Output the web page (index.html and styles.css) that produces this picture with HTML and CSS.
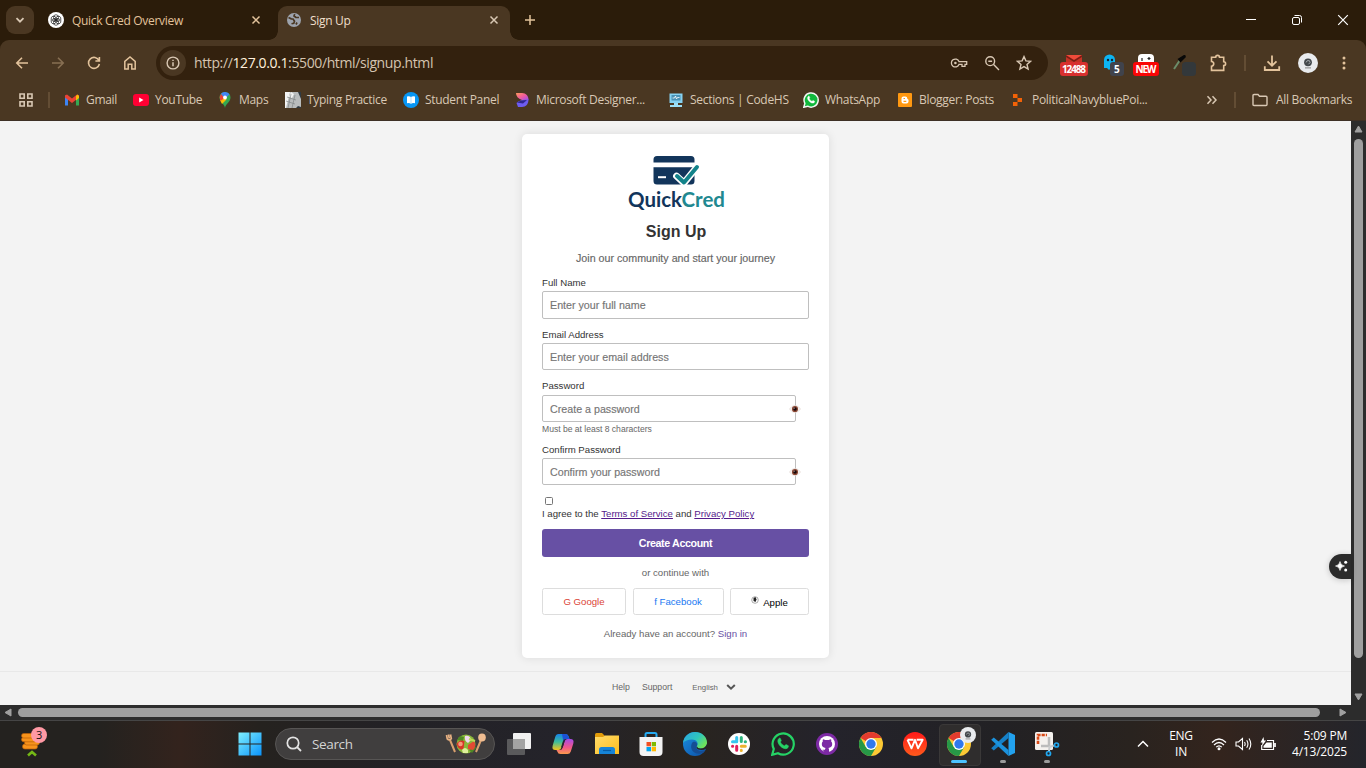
FILE: index.html
```html
<!DOCTYPE html>
<html lang="en">
<head>
<meta charset="utf-8">
<title>Sign Up</title>
<link rel="stylesheet" href="styles.css">
</head>
<body>
<svg class="defs" width="0" height="0" aria-hidden="true">
  <defs>
    <linearGradient id="gWin" x1="0" y1="0" x2="1" y2="1"><stop offset="0" stop-color="#7ff0ff"/><stop offset="1" stop-color="#0a93fa"/></linearGradient>
    <linearGradient id="gCopA" x1="0" y1="0" x2="0" y2="1"><stop offset="0" stop-color="#1683ea"/><stop offset=".5" stop-color="#3dbd9a"/><stop offset="1" stop-color="#f6c31c"/></linearGradient>
    <linearGradient id="gCopB" x1="0" y1="0" x2="0" y2="1"><stop offset="0" stop-color="#a64be8"/><stop offset=".55" stop-color="#f0568b"/><stop offset="1" stop-color="#fb9a4c"/></linearGradient>
    <linearGradient id="gFold" x1="0" y1="0" x2="1" y2="1"><stop offset="0" stop-color="#ffdc6b"/><stop offset="1" stop-color="#fdbd1d"/></linearGradient>
    <linearGradient id="gEdge" x1="0" y1="0" x2="1" y2=".6"><stop offset="0" stop-color="#2aa4e3"/><stop offset=".6" stop-color="#2fc6bd"/><stop offset="1" stop-color="#6ee25a"/></linearGradient>
    <linearGradient id="gEdge2" x1="0" y1="0" x2="1" y2="1"><stop offset="0" stop-color="#1b8fe0"/><stop offset="1" stop-color="#0c4fa5"/></linearGradient>
    <linearGradient id="gDes" x1="0" y1="0" x2="1" y2="1"><stop offset="0" stop-color="#ff9a5a"/><stop offset=".5" stop-color="#f25c9b"/><stop offset="1" stop-color="#9b4df0"/></linearGradient>
    <linearGradient id="gWps" x1="0" y1="0" x2="0" y2="1"><stop offset="0" stop-color="#ff1a1a"/><stop offset="1" stop-color="#ff5a1c"/></linearGradient>
    <symbol id="chrome" viewBox="0 0 24 24">
      <circle cx="12" cy="12" r="12" fill="#fcc934"/>
      <path d="M12 12L1.6 6A12 12 0 0 1 22.4 6H12z" fill="#e33b2e"/>
      <path d="M1.6 6A12 12 0 0 0 12 24L17.2 15 12 12 6.8 15z" fill="#279847"/>
      <circle cx="12" cy="12" r="6" fill="#fff"/><circle cx="12" cy="12" r="4.7" fill="#3079ee"/>
    </symbol>
    <symbol id="wa" viewBox="0 0 24 24">
      <path d="M1.2 22.8L2.8 17A10.6 10.6 0 1 1 7 21.3z" stroke-width="2.2"/>
    </symbol>
    <symbol id="phone" viewBox="0 0 24 24">
      <path d="M8.200 6.300c.8-.5 1.100-.1 1.400.7l.6 1.500c.1.5-.7 1.200-.9 1.500.9 1.900 2.400 3.200 4.300 3.900.5-.4 1-1.400 1.500-1.300l2.200 1.100c.4.6-.3 2.200-1.300 2.700-3.800 1.700-10.400-4.600-9-8.500.2-.7.6-1.200 1.200-1.600z" stroke-width=".6"/>
    </symbol>
    <symbol id="avatar" viewBox="0 0 20 20">
      <circle cx="10" cy="10" r="10" fill="#e9ebee"/><circle cx="10" cy="9.300" r="3.900" fill="#43484c"/><path d="M8 9.500l1-1.700 2.300-.2.800 2-1.700 1.700" fill="none" stroke="#a8adb0" stroke-width=".9"/><path d="M7 14.900h6" stroke="#777" stroke-width=".9"/>
    </symbol>
    <symbol id="eye" viewBox="0 0 12 8">
      <path d="M.5 4Q3 .5 6 .5T11.500 4Q9 7.500 6 7.500T.5 4z" fill="#fbf6f4" stroke="#d8ccc8" stroke-width=".6"/><circle cx="6" cy="4" r="3.100" fill="#8b4632"/><circle cx="6" cy="4" r="1.800" fill="#15080a"/><circle cx="5.100" cy="3.200" r=".6" fill="#cdb0b4"/>
    </symbol>
  </defs>
</svg>

<header class="browser">
  <div class="tabstrip">
    <button class="tabsearch"><svg width="10" height="10" viewBox="0 0 10 10"><path d="M1.500 3.200L5 6.700 8.500 3.200" class="ln cream" stroke-width="1.800"/></svg></button>
    <div class="tab">
      <svg width="16" height="16" viewBox="0 0 16 16"><circle cx="8" cy="8" r="8" fill="#fff"/><g fill="none" stroke="#222" stroke-width=".7"><ellipse cx="8" cy="5.700" rx="2.500" ry="3"/><ellipse cx="8" cy="5.700" rx="2.500" ry="3" transform="rotate(60 8 8)"/><ellipse cx="8" cy="5.700" rx="2.500" ry="3" transform="rotate(120 8 8)"/><ellipse cx="8" cy="5.700" rx="2.500" ry="3" transform="rotate(180 8 8)"/><ellipse cx="8" cy="5.700" rx="2.500" ry="3" transform="rotate(240 8 8)"/><ellipse cx="8" cy="5.700" rx="2.500" ry="3" transform="rotate(300 8 8)"/></g></svg>
      <span class="ui tabtitle">Quick Cred Overview</span>
      <svg width="10" height="10" viewBox="0 0 10 10"><path d="M1.500 1.500l7 7m0-7l-7 7" class="ln tan" stroke-width="1.500"/></svg>
    </div>
    <div class="tab active">
      <svg width="14" height="14" viewBox="0 0 14 14"><circle cx="7" cy="7" r="7" fill="#9da3ad"/><path d="M1.500 4.500l2.800 1.300 1.700.2 1.500 2.200-.7 2-2.300.6M7.800 1.200L7 3l1.800 1.300 3.200.2M9 11.500l1-2" fill="none" stroke="#4a3722" stroke-width="1.700"/></svg>
      <span class="ui tabtitle">Sign Up</span>
      <svg width="10" height="10" viewBox="0 0 10 10"><path d="M1.500 1.500l7 7m0-7l-7 7" class="ln cream" stroke-width="1.500"/></svg>
    </div>
    <svg class="newtab" width="12" height="12" viewBox="0 0 12 12"><path d="M6 1v10M1 6h10" class="ln tan" stroke-width="1.500"/></svg>
    <div class="winctl">
      <svg width="12" height="12" viewBox="0 0 12 12"><path d="M1 5.500h10" class="ln white"/></svg>
      <svg width="12" height="12" viewBox="0 0 12 12"><rect x="1.500" y="3.500" width="7" height="7" rx="1.500" class="ln white"/><path d="M3.500 1.500h5a2 2 0 0 1 2 2v5" class="ln white"/></svg>
      <svg width="12" height="12" viewBox="0 0 12 12"><path d="M1.200 1.200l9.600 9.600m0-9.600l-9.600 9.600" class="ln white" stroke-width="1.200"/></svg>
    </div>
  </div>

  <div class="toolbar">
    <div class="nav">
      <svg width="16" height="16" viewBox="0 0 16 16"><path d="M14 8H3M8 2.800L2.800 8 8 13.200" class="ln tan" stroke-width="1.600"/></svg>
      <svg class="dim" width="16" height="16" viewBox="0 0 16 16"><path d="M2 8h11M8 2.800L13.200 8 8 13.200" class="ln tan" stroke-width="1.600"/></svg>
      <svg width="16" height="16" viewBox="0 0 16 16"><path d="M13 5.500A5.500 5.500 0 1 0 13.400 9M13.400 2v4H9.400" class="ln tan" stroke-width="1.600"/></svg>
      <svg width="16" height="16" viewBox="0 0 16 16"><path d="M2.800 14V6.300L8 2l5.200 4.300V14H9.800V9.300H6.200V14z" class="ln tan" stroke-width="1.500"/></svg>
    </div>
    <div class="omnibox">
      <span class="info"><svg width="14" height="14" viewBox="0 0 14 14"><circle cx="7" cy="7" r="5.900" class="ln cream" stroke-width="1.400"/><path d="M7 6.200v4M7 3.700v1.300" class="ln cream" stroke-width="1.500"/></svg></span>
      <span class="ui url">http://<b>127.0.0.1</b>:5500/html/signup.html</span>
      <svg width="18" height="12" viewBox="0 0 20 14"><path d="M10 5.300A4.600 4.600 0 1 0 10 8.700H13.500v2.300h3.500V8.700h2V5.300z" class="ln cream" stroke-width="1.500"/><circle cx="5.800" cy="7" r="1.500" fill="#d9c8b4"/></svg>
      <svg width="16" height="16" viewBox="0 0 16 16"><circle cx="6.200" cy="6.200" r="4.400" class="ln cream" stroke-width="1.400"/><path d="M4.300 6.200h3.800M9.600 9.600L15 15" class="ln cream" stroke-width="1.400"/></svg>
      <svg width="16" height="16" viewBox="0 0 16 16"><path d="M8 1.600l1.900 4.300 4.700.4-3.600 3.100 1.100 4.600L8 11.600 3.900 14 5 9.400 1.400 6.300l4.700-.4z" class="ln cream" stroke-width="1.400"/></svg>
    </div>
    <div class="exts">
      <svg width="30" height="28" viewBox="0 0 30 28"><path d="M7 6h16v9H7z" fill="#7c1d14"/><path d="M7 6h16l-8 5z" fill="#ee4b3a"/><path d="M7 8v7h16V8l-8 5z" fill="#c43326"/><rect x="1" y="13" width="28" height="14" rx="3" fill="#d8302f"/><text x="3" y="24" class="badge" textLength="24">12488</text></svg>
      <svg width="26" height="28" viewBox="0 0 26 28"><path d="M5 19v-8a5.500 5.500 0 0 1 11 0v9l-3-2-3 3-2-2z" fill="#0db4f2"/><circle cx="9" cy="11" r="1.200" fill="#123"/><circle cx="13" cy="11" r="1.200" fill="#123"/><rect x="11" y="13" width="14" height="14" rx="3" fill="#40434c"/><text x="15" y="24" class="badge">5</text></svg>
      <svg width="28" height="28" viewBox="0 0 28 28"><rect x="6" y="5" width="16" height="14" rx="4" fill="#fff"/><path d="M10 9v3M15.500 9.500h3M17 8v3" stroke="#222" stroke-width="1.200"/><rect x="1" y="13" width="26" height="14" rx="3" fill="#f90606"/><text x="3.500" y="24" class="badge" textLength="21">NEW</text></svg>
      <svg width="28" height="28" viewBox="0 0 28 28"><path d="M5 20l6-9" stroke="#6b8e6b" stroke-width="2"/><path d="M8.500 10l3 3.500 5-5c1-2-.5-3-2-2.200z" fill="#080808"/><rect x="13" y="13" width="14" height="14" rx="3.500" fill="#33383b"/></svg>
      <svg width="20" height="20" viewBox="0 0 20 20"><path d="M2.500 4.300h4.200a1.900 1.900 0 0 1 3.800 0h4.200v4.500a1.900 1.900 0 0 1 0 3.800v4.800H2.500v-4.200c3-.2 3-4.500 0-4.700z" class="ln tan" stroke-width="1.600"/></svg>
      <i class="sep"></i>
      <svg width="18" height="18" viewBox="0 0 18 18"><path d="M9 1.500v10M4.500 7.300L9 11.700l4.500-4.400M1.800 12.300V16h14.400v-3.700" class="ln tan" stroke-width="1.800"/></svg>
      <svg width="20" height="20"><use href="#avatar"/></svg>
      <svg width="6" height="18" viewBox="0 0 6 18"><circle cx="3" cy="4" r="1.500" fill="#e3c39c"/><circle cx="3" cy="9" r="1.500" fill="#e3c39c"/><circle cx="3" cy="14" r="1.500" fill="#e3c39c"/></svg>
    </div>
  </div>

  <nav class="bookmarks ui">
    <svg width="16" height="16" viewBox="0 0 16 16"><path d="M2 2h4.200v4.200H2zM9.800 2H14v4.200H9.800zM2 9.800h4.200V14H2zM9.800 9.800H14V14H9.800z" class="ln cream" stroke-width="1.600"/></svg>
    <i class="sep"></i>
    <a><svg width="16" height="16" viewBox="0 0 16 16"><path d="M1 3v10.500h3V7z" fill="#3d84f5"/><path d="M15 3v10.500h-3V7z" fill="#34a853"/><path d="M1 3.500L3 2.500l5 4 5-4 2 1v2L8 11 1 5.500z" fill="#ea4335"/><path d="M12 4l1.500-1.500L15 4v2l-3 2.400z" fill="#fbbc04"/></svg><span>Gmail</span></a>
    <a><svg width="16" height="16" viewBox="0 0 16 16"><rect y="2" width="16" height="12" rx="3" fill="#ff0033"/><path d="M6.200 5.500v5L10.500 8z" fill="#fff"/></svg><span>YouTube</span></a>
    <a><svg width="16" height="16" viewBox="0 0 16 16"><path d="M8 16C7.500 12 2.500 10 2.500 5.500a5.500 5.500 0 0 1 11 0C13.500 10 8.500 12 8 16z" fill="#34a853"/><path d="M3 8l5-2.500 1.500 2L5 12z" fill="#fbbc04"/><path d="M2.600 5l1.500-3.200L8 5.500 3.500 9z" fill="#ea4335"/><path d="M4 1.700A5.500 5.500 0 0 1 12.500 2.300L8 7z" fill="#4285f4"/><circle cx="8" cy="5.500" r="1.900" fill="#fff"/></svg><span>Maps</span></a>
    <a><svg width="16" height="16" viewBox="0 0 16 16"><path d="M0 0h16v16H0z" fill="#b9bcbd"/><path d="M0 0h5L1 16H0zM6 0l3 2-2 4-3-1z" fill="#f3f4f4"/><path d="M13 0h3v7zM11 16l2-2 3 1v1z" fill="#303a42"/><path d="M2 5l9 3M1 9l9 3M6 2l-3 14M10 3l-3 13" stroke="#777c7e" stroke-width=".6"/></svg><span>Typing Practice</span></a>
    <a><svg width="16" height="16" viewBox="0 0 16 16"><circle cx="8" cy="8" r="8" fill="#0796f5"/><path d="M4 4.500q2.300-.8 4 .4 1.700-1.200 4-.4v6.800q-2.300-.6-4 .5-1.700-1.100-4-.5z" fill="#fff"/><path d="M8 5v6.500" stroke="#8bcfff" stroke-width=".7"/></svg><span>Student Panel</span></a>
    <a class="designer"><svg width="16" height="16" viewBox="0 0 16 16"><path d="M2 1h6c4 0 6.500 3 6.500 7H8Q2 6 2 1z" fill="url(#gDes)"/><path d="M2.500 11Q5 7.500 14.500 7.500C14.500 12 12 15 8 15H4z" fill="#6d5cf0"/><path d="M3 10.500q3-2.500 10-2.500l-4 3.500z" fill="#2f2590"/></svg><span>Microsoft Designer...</span></a>
    <a><svg width="16" height="16" viewBox="0 0 16 16"><rect x="1.500" y="1.500" width="13" height="9.500" fill="#86d2f1"/><rect x="3.500" y="3" width="9" height="5.500" fill="#4a92b5"/><path d="M4.500 6h2l1-2 1 3 1-1.500h2" stroke="#fff" stroke-width=".8" fill="none"/><path d="M6 11h4v2h4v2H2v-2h4z" fill="#9ce0f8"/></svg><span>Sections | CodeHS</span></a>
    <a><svg width="16" height="16"><use href="#wa" fill="#10b83c" stroke="#f4f8f4"/><use href="#phone" fill="#fff" stroke="#fff"/></svg><span>WhatsApp</span></a>
    <a class="blogger"><svg width="16" height="16" viewBox="0 0 16 16"><rect x="1" y="1" width="14" height="14" rx="1" fill="#ff9811"/><path d="M4.500 6.500a2 2 0 0 1 2-2h1.800a2 2 0 0 1 2 2c0 .8 1.200.5 1.200 1.500v1.500a2 2 0 0 1-2 2h-3a2 2 0 0 1-2-2z" fill="#fff"/><path d="M6.500 6.500H8M6.500 9.400h2.800" stroke="#ff9811" stroke-width="1.100"/></svg><span>Blogger: Posts</span></a>
    <a><svg width="16" height="16" viewBox="0 0 16 16"><path d="M3 2h4.500v4H3zM7.500 6H12v4H7.500zM3 10h4.500v4H3z" fill="#f26207"/></svg><span>PoliticalNavybluePoi...</span></a>
    <svg class="more" width="12" height="12" viewBox="0 0 12 12"><path d="M1.500 2.300L5 6 1.500 9.700M6.500 2.300L10 6 6.500 9.700" class="ln cream" stroke-width="1.500"/></svg>
    <i class="sep"></i>
    <a class="all"><svg width="16" height="16" viewBox="0 0 16 16"><path d="M1 3.500q0-1 1-1h4l1.500 1.800H14q1 0 1 1V12.500q0 1-1 1H2q-1 0-1-1z" class="ln cream" stroke-width="1.400"/></svg><span>All Bookmarks</span></a>
  </nav>
</header>

<main class="viewport">
  <div class="page">
    <section class="card">
      <svg class="logo" width="98" height="58" viewBox="0 0 98 58">
        <path d="M25.500 7.500V4.500a3.500 3.500 0 0 1 3.500-3.500H63a3.500 3.500 0 0 1 3.500 3.500V7.500zM25.500 12.300h41V26a3.500 3.500 0 0 1-3.500 3.500H29A3.500 3.500 0 0 1 25.500 26z" fill="#12355b"/>
        <path d="M30 22.200h8" stroke="#fff" stroke-width="2"/>
        <path d="M48.500 21L56 28 69 12" fill="none" stroke="#fff" stroke-width="6.800" stroke-linecap="round"/>
        <path d="M49 21L56 27.500L69 12" fill="none" stroke="#12838a" stroke-width="4" stroke-linecap="round" stroke-linejoin="round"/>
        <text x="0" y="52" class="brand" textLength="97" lengthAdjust="spacingAndGlyphs"><tspan fill="#12355b">Quick</tspan><tspan fill="#218890">Cred</tspan></text>
      </svg>
      <h1>Sign Up</h1>
      <p class="lead">Join our community and start your journey</p>
      <form class="form">
        <label>Full Name</label>
        <div class="field first">Enter your full name</div>
        <label class="g1">Email Address</label>
        <div class="field">Enter your email address</div>
        <label class="g1">Password</label>
        <div class="field short g0">Create a password<svg width="12" height="8"><use href="#eye"/></svg></div>
        <small>Must be at least 8 characters</small>
        <label class="g2">Confirm Password</label>
        <div class="field short">Confirm your password<svg width="12" height="8"><use href="#eye"/></svg></div>
        <span class="check"></span>
        <p class="agree">I agree to the <a>Terms of Service</a> and <a>Privacy Policy</a></p>
        <div class="submit">Create Account</div>
        <p class="or">or continue with</p>
        <div class="social">
          <div class="google">G Google</div>
          <div class="facebook">f Facebook</div>
          <div class="apple"><svg width="8" height="8" viewBox="0 0 8 8"><circle cx="4" cy="4" r="3.300" fill="none" stroke="#888" stroke-width=".7"/><path d="M2.500 2L4.500 1 5.500 3.500 4.500 6 2.500 5z" fill="#222"/></svg>Apple</div>
        </div>
        <p class="signin">Already have an account? <a>Sign in</a></p>
      </form>
    </section>
    <footer class="foot">
      <span class="help">Help</span><span class="support">Support</span><span class="lang">English</span>
      <svg width="10" height="8" viewBox="0 0 10 8"><path d="M1.200 2L5 5.700 8.800 2" fill="none" stroke="#555" stroke-width="2"/></svg>
    </footer>
    <div class="spark"><svg width="14" height="14" viewBox="0 0 14 14"><path d="M5 2.500q.6 3.900 4.500 4.500Q5.600 7.600 5 11.500 4.400 7.600.5 7 4.400 6.400 5 2.500z" fill="#fff" stroke="#fff" stroke-width=".6"/><circle cx="10.700" cy="3.300" r="1.500" fill="#fff"/><circle cx="10.700" cy="10.900" r="1.500" fill="#fff"/></svg></div>
  </div>
  <div class="vbar"><svg width="9" height="8" viewBox="0 0 9 8"><path d="M4.500 1L8 7H1z" class="arr"/></svg><i></i><svg width="9" height="8" viewBox="0 0 9 8"><path d="M4.500 7L8 1H1z" class="arr"/></svg></div>
  <div class="hbar"><svg width="8" height="9" viewBox="0 0 8 9"><path d="M1 4.500L7 8V1z" class="arr"/></svg><i></i><svg width="8" height="9" viewBox="0 0 8 9"><path d="M7 4.500L1 8V1z" class="arr"/></svg></div>
</main>

<div class="taskbar ui">
  <svg class="coins" width="28" height="32" viewBox="0 0 28 32"><g fill="#f7931b" stroke="#b95f08" stroke-width=".7"><rect x="2.500" y="17" width="15" height="5" rx="2.300"/><rect x="4.500" y="13.500" width="15" height="4.500" rx="2.200"/><rect x="1.500" y="10.300" width="15" height="4.500" rx="2.200"/><rect x="1.500" y="6.500" width="15" height="4.500" rx="2.200"/></g><path d="M8 28.500l4-3.500 4 3.500" fill="none" stroke="#74b816" stroke-width="2.600"/><circle cx="19" cy="8" r="8" fill="#ff99a4"/><text x="16" y="12" class="count">3</text></svg>
  <svg class="start" width="24" height="24" viewBox="0 0 24 24"><path d="M.5.500h11v11H.5zM12.500.500h11v11h-11zM.5 12.500h11v11H.5zM12.500 12.500h11v11h-11z" fill="url(#gWin)"/></svg>
  <div class="search">
    <svg width="16" height="16" viewBox="0 0 16 16"><circle cx="7" cy="7" r="5.700" fill="none" stroke="#e3e3e3" stroke-width="1.700"/><path d="M11 11l4 4" stroke="#e3e3e3" stroke-width="1.800"/></svg>
    <span>Search</span>
    <svg width="42" height="24" viewBox="0 0 42 24"><path d="M5 8l5 12M36 8l-5 12" stroke="#d9a06e" stroke-width="2"/><path d="M1.500 3l.8 4q2 2 4-.3L5.500 2.500M3.500 2.500l.8 4" fill="none" stroke="#e8b283" stroke-width="1.700"/><ellipse cx="37" cy="5.500" rx="3.800" ry="4" fill="#f0bd91"/><circle cx="21" cy="12" r="9.500" fill="#89b83a"/><path d="M12 8l3-4 4 1-1 4zM24 18l6-4 1 2-4 5z" fill="#4f8824"/><path d="M11.500 12q3-5 8-3l-1 8q-5 2-7-5z" fill="#d93626"/><path d="M23 13l6-4q3 5-1 9l-5-1z" fill="#e24a33"/><path d="M20 4q5-1 6 4l-3 3q-4-2-3-7z" fill="#f1d7ec"/><path d="M17 18q3-4 6 0v3h-5z" fill="#dff09b"/><circle cx="15.500" cy="12" r="2.300" fill="#f39a7a"/><path d="M24 7l6 2" stroke="#bddb55" stroke-width="2"/></svg>
  </div>
  <div class="apps">
    <span><svg width="24" height="24" viewBox="0 0 24 24"><rect x="6" y="1" width="18" height="16" rx="1" fill="#f1f1f1"/><rect y="7" width="18" height="16" rx="1" fill="#5a5a5c"/><path d="M6 7h12v10H6z" fill="#a3a3a3"/></svg></span>
    <span><svg width="24" height="24" viewBox="0 0 24 24"><path d="M7.500 2h7q2.500 0 3.200 2.500l.8 2.500H15q-2 0-2.700 2.500l-2 6.500q-.7 2-2.800 2H4.500Q.5 18 1.700 13.500l2.500-8.500Q5 2 7.500 2z" fill="url(#gCopA)"/><path d="M11 2h3.500q2.500 0 3.200 2.500l.8 2.500H15q-2 0-2.700 2.500z" fill="#1c52d6"/><path d="M16.500 22h-7q-2.500 0-3.200-2.500L5.500 18H9q2 0 2.700-2.500l2-6.500q.7-2 2.800-2h3q4 0 2.800 4.500l-2.500 8.000Q19 22 16.500 22z" fill="url(#gCopB)"/><path d="M15.500 7h-1q-2 0-2.700 2.500L10 15.500h1.700l2-6.500q.5-1.500 1.800-2z" fill="#282631"/></svg></span>
    <span><svg width="24" height="24" viewBox="0 0 24 24"><path d="M0 2.500Q0 1 1.500 1H7l2.500 2.500V9H0z" fill="#e19b09"/><path d="M0 5h8l2-1.500h14V22H0z" fill="url(#gFold)"/><path d="M4 22v-4.500Q4 15 6.500 15h11q2.500 0 2.500 2.500V22z" fill="#1684d8"/><path d="M8 18.500h8" stroke="#075ba5" stroke-width="1.200"/></svg></span>
    <span><svg width="24" height="24" viewBox="0 0 24 24"><path d="M6.500 6V2.500Q6.500 1 8 1h8q1.500 0 1.500 1.500V6" fill="none" stroke="#24aaf2" stroke-width="2"/><path d="M.5 5h23v15q0 4-4 4h-15q-4 0-4-4z" fill="#f3f3f3"/><path d="M7.500 10H12v4.300H7.500z" fill="#f25022"/><path d="M12.700 10H17v4.300h-4.300z" fill="#7fba00"/><path d="M7.500 15H12v4.300H7.500z" fill="#00a4ef"/><path d="M12.700 15H17v4.300h-4.300z" fill="#ffb900"/></svg></span>
    <span><svg width="24" height="24" viewBox="0 0 24 24"><circle cx="12" cy="12" r="12" fill="url(#gEdge2)"/><path d="M0 11C1 4 6 0 12 0c7 0 12 5 12 10.500 0 4-3 6-6.500 6-3 0-4.500-1-3.500-2.500 2-3-.5-6.500-5-6.500C5 7.500 1.500 9 0 11z" fill="url(#gEdge)"/><path d="M9 11c-3 6 2 12 9 10.500 2-.5 3.500-2 4.500-3.500-4 2-8 1-9-1.500-.5-1-.2-2 .5-2.800C15 11 11 8 9 11z" fill="#154d94"/><path d="M14 14.500q-1.300 2 1.500 3 4 1.200 7.500-.8l1.500.3-.5-5q-2 4.500-6.500 4.500-3 0-3.500-2z" fill="#282422"/></svg></span>
    <span><svg width="24" height="24" viewBox="0 0 24 24"><circle cx="12" cy="12" r="11" fill="#fff"/><g stroke-width="3" stroke-linecap="round"><path d="M9.700 5.500v4.200M5.500 9.700h4" stroke="#36c5f0"/><path d="M14.300 5.500v4M18.500 9.700h-.3" stroke="#2eb67d"/><path d="M14.300 14.300h4M14.300 18.300v.2" stroke="#ecb22e"/><path d="M9.700 14.300v4M5.500 14.300h.2" stroke="#e01e5a"/></g></svg></span>
    <span><svg width="24" height="24"><use href="#wa" fill="none" stroke="#25d366"/><use href="#phone" fill="#25d366" stroke="#25d366"/></svg></span>
    <span><svg width="24" height="24" viewBox="0 0 24 24"><circle cx="12" cy="12" r="11" fill="#7d2aa5"/><circle cx="12" cy="12" r="8" fill="#fff"/><path d="M10 21v-3.300c-2 .4-2.800-.6-3.400-1.700M10 21v-3.500q0-1 .6-1.500c-2.400-.3-3.800-1.400-3.800-4 0-1.100.4-1.900 1-2.500q-.3-1.200.2-2.300 1.100.1 2.100.9 1.900-.4 3.800 0 1-.8 2.100-.9.500 1.100.2 2.300c.6.6 1 1.400 1 2.500 0 2.600-1.400 3.700-3.800 4q.6.500.6 1.500V21z" fill="#7d2aa5"/></svg></span>
    <span><svg width="24" height="24"><use href="#chrome"/></svg></span>
    <span><svg width="24" height="24" viewBox="0 0 24 24"><circle cx="12" cy="12" r="12" fill="url(#gWps)"/><path d="M4.500 7.800h6M4.500 7.800l4 8.500 3.500-8.500 3 8.500 4.700-8.500h-6" fill="none" stroke="#fff" stroke-width="1.900" stroke-linejoin="round"/></svg></span>
    <span class="on"><svg width="24" height="24"><use href="#chrome"/></svg><svg class="prof" width="16" height="16"><use href="#avatar"/></svg></span>
    <span class="run"><svg width="24" height="24" viewBox="0 0 24 24"><path d="M17.500 0L24 3v18l-6.500 3z" fill="#22a2ef"/><path d="M17.500 6L2.800 18.500.2 16.300 17.500 0z" fill="#1580c8"/><path d="M17.500 18L2.800 5.500.2 7.700 17.500 24z" fill="#1b92dd"/></svg></span>
    <span class="run"><svg width="26" height="26" viewBox="0 0 26 26"><rect x="1" y="1" width="18" height="18" rx="1.500" fill="#f4f1ee"/><path d="M4 13V4h9" fill="none" stroke="#d94a17" stroke-width="2.600" stroke-dasharray="3.200 1"/><path d="M15 6v9H7" fill="none" stroke="#bcbcbc" stroke-width="2.500"/><path d="M15 16l5-1.500M15.500 15.500L15 20" stroke="#c9cbcd" stroke-width="2"/><circle cx="22.500" cy="14" r="2" fill="none" stroke="#20a6ee" stroke-width="1.700"/><circle cx="14.500" cy="22.500" r="2" fill="none" stroke="#20a6ee" stroke-width="1.700"/></svg></span>
  </div>
  <div class="tray">
    <svg width="12" height="8" viewBox="0 0 12 8"><path d="M1 6.500L6 1.500l5 5" class="ln white" stroke-width="1.500"/></svg>
    <div class="kb">ENG<br>IN</div>
    <svg width="16" height="14" viewBox="0 0 16 14"><path d="M1 5.500q7-7 14 0M3 8q5-5 10 0M5.200 10.200q2.800-2.800 5.600 0" fill="none" stroke="#fff" stroke-width="1.200"/><circle cx="8" cy="11.700" r="1.500" fill="#fff"/></svg>
    <svg width="17" height="14" viewBox="0 0 17 14"><path d="M1 5h2.500L7.500 1.500v11L3.500 9H1z" class="ln white" stroke-width="1.100"/><path d="M9.500 5q1.300 2 0 4M11.700 3.200q2.500 3.800 0 7.600M14 1.500q3.600 5.500 0 11" fill="none" stroke="#fff" stroke-width="1.100"/></svg>
    <svg width="17" height="14" viewBox="0 0 17 14"><path d="M7 3.500h6.500v9H1.700V8" class="ln white" stroke-width="1.200"/><path d="M6.500 5.500h5.300v5.300H3.500V9z" fill="#fff"/><path d="M15 6v4" stroke="#fff" stroke-width="1.700"/><path d="M3.500 0L.5 5.500h2L2 9l4-5.500H4z" fill="#fff"/></svg>
    <div class="clock">5:09 PM<br>4/13/2025</div>
  </div>
</div>
</body>
</html>
```
FILE: styles.css
```css
* { box-sizing: border-box; }
body { margin: 0; width: 1366px; height: 768px; overflow: hidden; display: flex; flex-direction: column; font-family: "Liberation Sans", Arial, sans-serif; }
svg { display: block; flex: none; }
.defs { position: absolute; }
p, h1 { margin: 0; }
.ui { font-family: "Open Sans", "Noto Sans", sans-serif; font-size: 12px; letter-spacing: -.3px; white-space: nowrap; }
.ln { fill: none; }
.cream { stroke: #d9c8b4; }
.tan { stroke: #e3c39c; }
.white { stroke: #fff; }
.dim { opacity: .4; }
.sep { width: 2px; height: 16px; background: #634d34; flex: none; }

/* Browser chrome */
.browser { height: 121px; flex: none; background: #2b1c0a; }
.tabstrip { height: 40px; display: flex; align-items: flex-start; padding-top: 6px; }
.tabsearch { width: 28px; height: 28px; margin-left: 6px; border: 0; padding: 0; border-radius: 9px; background: #4a3722; display: grid; place-items: center; }
.tab { width: 236px; height: 28px; margin-left: 8px; padding: 0 17px 0 6px; display: flex; align-items: center; gap: 8px; color: #e3c39c; }
.tab .tabtitle { flex: 1; }
.tab.active { position: relative; width: 232px; height: 34px; margin-left: 0; padding: 0 11px 6px 9px; gap: 9px; border-radius: 9px 9px 0 0; background: #4a3722; color: #f0dfcb; }
.tab.active::before, .tab.active::after { content: ""; position: absolute; bottom: 0; width: 9px; height: 9px; }
.tab.active::before { left: -9px; background: radial-gradient(circle at 0 0, transparent 8.5px, #4a3722 9px); }
.tab.active::after { right: -9px; background: radial-gradient(circle at 100% 0, transparent 8.5px, #4a3722 9px); }
.newtab { margin: 8px 0 0 14px; }
.winctl { margin: 8px 17px 0 auto; display: flex; gap: 34px; }
.toolbar { height: 46px; padding: 0 19px 0 14px; display: flex; align-items: center; background: #4a3722; border-radius: 9px 9px 0 0; }
.nav { flex: none; display: flex; gap: 20px; width: 142px; }
.omnibox { flex: none; width: 892px; height: 34px; border-radius: 17px; background: #33210e; display: flex; align-items: center; gap: 16px; padding: 0 16px 0 4px; }
.info { width: 26px; height: 26px; border-radius: 13px; background: #4a3722; display: grid; place-items: center; }
.url { flex: 1; margin: 0 0 1px -8px; font-size: 14px; letter-spacing: -.38px; color: #d5c4b0; }
.url b { font-weight: 400; color: #fff0dd; }
.exts { flex: 1; display: flex; align-items: center; margin-left: 11px; }
.exts svg:nth-child(2) { margin-left: 10px; }
.exts svg:nth-child(3) { margin-left: 7px; }
.exts svg:nth-child(4) { margin-left: 9px; }
.exts svg:nth-child(5) { margin-left: 12px; }
.exts .sep { margin: 0 17px 0 15px; }
.exts svg:nth-child(8) { margin-left: 17px; }
.exts svg:nth-child(9) { margin-left: 23px; }
.badge { font: 700 10px "Open Sans", sans-serif; fill: #fff; letter-spacing: 0; }
.bookmarks { height: 35px; padding: 0 0 7px 18px; display: grid; align-items: center; grid-template-columns: 30px 16px 69px 84px 68px 118px 112px 153px 135px 95px 112px 196px 28px 17px 1fr; background: #4a3722; border-bottom: 1px solid #3e3025; color: #d9c8b4; }
.bookmarks a { display: flex; align-items: center; gap: 6px; }
.bookmarks .designer, .bookmarks .blogger { margin-left: -1px; }
.bookmarks .all { gap: 8px; margin-left: 1px; }

/* Page */
.viewport { height: 599px; flex: none; display: grid; grid-template: 584px 15px / 1351px 15px; background: #2c2c2c; }
.page { position: relative; background: #f3f3f3; padding-top: 13px; }
.card { width: 307px; height: 524px; margin: 0 auto; padding: 21px 20px 0; background: #fff; border-radius: 5px; box-shadow: 0 0 10px rgba(0,0,0,.1); text-align: center; font-size: 9.63px; color: #333; }
.logo { margin-left: 86px; }
.brand { font: 700 21px Lato, sans-serif; }
h1 { margin-top: 9px; padding-left: 1px; font-size: 16px; line-height: 20px; color: #333; }
.lead { margin-top: 10px; font-size: 10.7px; line-height: 12px; color: #666; -webkit-text-stroke: .15px #666; }
.form { display: flex; flex-direction: column; text-align: left; margin-top: 13px; }
.form label { line-height: 12px; }
.g1 { margin-top: 10px; }
.g2 { margin-top: 9px; }
.field { display: flex; align-items: center; justify-content: space-between; height: 27px; margin-top: 2px; padding: 0 7px; border: 1px solid #bfbfbf; border-radius: 2px; font-size: 10.7px; color: #757575; -webkit-text-stroke: .15px #757575; }
.field.first { height: 28px; }
.field.g0 { margin-top: 3px; }
.field.short { width: 254px; padding-right: 0; }
.field.short svg { margin-right: -6px; }
.form small { margin-top: 1px; font-size: 8.600px; line-height: 12px; letter-spacing: -.02px; color: #666; }
.check { width: 8px; height: 8px; margin: 12px 0 0 3px; border: 1px solid #767676; border-radius: 1.5px; }
.agree { margin-top: 3px; line-height: 12px; }
.agree a { color: #551a8b; text-decoration: underline; }
.submit { height: 28px; margin-top: 9px; border-radius: 3px; background: #6750a4; color: #fff; font-size: 10.7px; font-weight: 700; letter-spacing: -.38px; line-height: 28px; text-align: center; }
.or { margin-top: 10px; text-align: center; line-height: 12px; color: #666; }
.social { display: grid; grid-template-columns: 84px 91px 79px; justify-content: space-between; margin-top: 9px; }
.social div { height: 27px; display: flex; align-items: center; justify-content: center; border: 1px solid #ddd; border-radius: 2.500px; }
.google { color: #db4437; }
.facebook { color: #1877f2; }
.apple { color: #000; gap: 4px; padding-top: 1px; }
.apple svg { margin-top: -5px; }
.signin { margin-top: 13px; text-align: center; line-height: 12px; color: #666; }
.signin a { color: #6750a4; }
.foot { height: 33px; margin-top: 13px; padding: 0 0 2px 612px; border-top: 1px solid #e8e8e8; display: flex; align-items: center; font-size: 8.7px; color: #666; }
.support { margin-left: 12px; }
.lang { margin-left: 20px; font-size: 7.800px; }
.foot svg { margin-left: 8px; }
.spark { position: absolute; right: 0; top: 433px; width: 22px; height: 25px; padding: 5px 0 0 6px; border-radius: 13px 0 0 13px; background: #2b2b2b; box-shadow: 0 1px 6px rgba(0,0,0,.2); }
.arr { fill: #a0a0a0; stroke: #a0a0a0; stroke-linejoin: round; }
.vbar { display: flex; flex-direction: column; align-items: center; padding-top: 4px; }
.vbar i { width: 9px; height: 519px; margin: 6px 0 35px; border-radius: 5px; background: #9f9f9f; }
.hbar { grid-column: 1 / 3; display: flex; align-items: center; padding-left: 4px; }
.hbar i { width: 1302px; height: 9px; margin: 0 19px 0 6px; border-radius: 5px; background: #9f9f9f; }

/* Taskbar */
.taskbar { height: 48px; flex: none; display: flex; align-items: center; padding-bottom: 2px; border-top: 1px solid #454545; background: linear-gradient(90deg, #24221f 0, #24221f 100px, #33231d 180px, #25221f 260px, #232226 400px, #24232a 560px, #29241f 690px, #24232b 830px, #222124 1000px, #29231f 1130px, #33241d 1220px, #24252b 1366px); color: #fff; }
.coins { margin: -1px 0 0 20px; }
.count { font-size: 11px; fill: #111; letter-spacing: 0; }
.start { margin-left: 190px; }
.search { width: 220px; height: 32px; margin-left: 13px; padding: 0 7px 0 10px; display: flex; align-items: center; gap: 10px; border: 1px solid #575554; border-radius: 16px; background: #403e3e; color: #d4d4d4; font-size: 13.500px; letter-spacing: -.35px; }
.search span { flex: 1; }
.apps { display: flex; margin-left: 2px; }
.apps span { position: relative; width: 44px; height: 40px; display: grid; place-items: center; }
.apps .on::before { content: ""; position: absolute; left: 2px; top: 0; width: 40px; height: 40px; border: 1px solid #3a3838; border-radius: 4px; background: #2f2d2d; z-index: -1; }
.apps .on { z-index: 0; }
.prof { position: absolute; left: 23px; top: 3px; }
.on::after, .run::after { content: ""; position: absolute; bottom: 1px; left: 19px; width: 6px; height: 3px; border-radius: 2px; background: #9b9b9b; }
.on::after { left: 14px; width: 16px; background: #4cc2ff; }
.tray { flex: 1; display: flex; align-items: center; margin-left: 68px; padding-right: 19px; font-size: 12px; line-height: 16px; }
.kb { width: 26px; margin: 0 17px 0 19px; text-align: center; }
.tray > svg + svg { margin-left: 8px; }
.clock { margin-left: auto; text-align: right; letter-spacing: -.2px; }
```
